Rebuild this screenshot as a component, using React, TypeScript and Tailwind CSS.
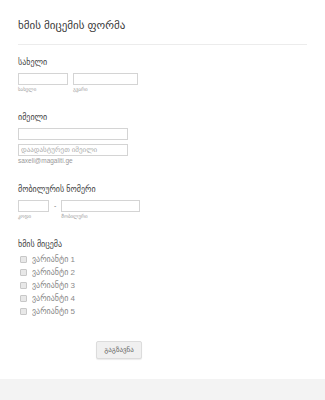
const font = "font-['Liberation_Sans','DejaVu_Sans',sans-serif]";

const options = ["ვარიანტი 1", "ვარიანტი 2", "ვარიანტი 3", "ვარიანტი 4", "ვარიანტი 5"];

export default function App() {
  return (
    <div className={`${font} min-h-[400px] bg-white flex flex-col`}>
      <div className="flex-1 px-[18px] pt-[18px]">
        <h1 className="text-[11px] leading-[14px] text-[#3a3a3a]">ხმის მიცემის ფორმა</h1>
        <div className="mt-[12px] w-[289px] border-b border-[#ececec]" />

        {/* სახელი */}
        <div className="mt-[13px]">
          <p className="text-[8px] leading-[10px] text-[#444]">სახელი</p>
          <div className="mt-[5px] flex gap-[5px]">
            <div className="flex flex-col">
              <div className="w-[50px] h-[12px] border border-[#d4d4d4] bg-white" />
              <span className="mt-[1px] text-[5px] leading-[7px] text-[#999]">სახელი</span>
            </div>
            <div className="flex flex-col">
              <div className="w-[65px] h-[12px] border border-[#d4d4d4] bg-white" />
              <span className="mt-[1px] text-[5px] leading-[7px] text-[#999]">გვარი</span>
            </div>
          </div>
        </div>

        {/* იმეილი */}
        <div className="mt-[20px]">
          <p className="text-[8px] leading-[10px] text-[#444]">იმეილი</p>
          <div className="mt-[5px] w-[110px] h-[12px] border border-[#d4d4d4] bg-white" />
          <div className="mt-[4px] w-[110px] h-[12px] border border-[#d4d4d4] bg-white flex items-center px-[2px]">
            <span className="text-[7px] leading-[10px] text-[#aaa]">დაადასტურეთ იმეილი</span>
          </div>
          <span className="block mt-[1px] text-[6.5px] leading-[8px] text-[#999]">saxeli@magaliti.ge</span>
        </div>

        {/* მობილურის ნომერი */}
        <div className="mt-[20px]">
          <p className="text-[8px] leading-[10px] text-[#444]">მობილურის ნომერი</p>
          <div className="mt-[5px] flex items-start gap-[3px]">
            <div className="flex flex-col">
              <div className="w-[31px] h-[12px] border border-[#d4d4d4] bg-white" />
              <span className="mt-[1px] text-[5px] leading-[7px] text-[#999]">კოდი</span>
            </div>
            <span className="px-[2px] text-[7px] leading-[12px] text-[#777]">-</span>
            <div className="flex flex-col">
              <div className="w-[79px] h-[12px] border border-[#d4d4d4] bg-white" />
              <span className="mt-[1px] text-[5px] leading-[7px] text-[#999]">მობილური</span>
            </div>
          </div>
        </div>

        {/* ხმის მიცემა */}
        <div className="mt-[20px]">
          <p className="text-[8px] leading-[10px] text-[#444]">ხმის მიცემა</p>
          <div className="mt-[3px] flex flex-col">
            {options.map((o) => (
              <label key={o} className="flex items-center h-[13px] pl-[2px]">
                <span className="w-[7px] h-[7px] rounded-[1px] border border-[#c8c8c8] bg-[#e8e8e8]" />
                <span className="ml-[5px] text-[8px] leading-[10px] text-[#8a8a8a]">{o}</span>
              </label>
            ))}
          </div>
        </div>

        <div className="mt-[23px] mb-[18px] flex pl-[78px]">
          <button className="w-[46px] h-[18px] rounded-[2px] border border-[#dcdcdc] bg-[#f0f0f0] text-[7px] text-[#666] shadow-[0_1px_1px_rgba(0,0,0,0.08)]">
            გაგზავნა
          </button>
        </div>
      </div>
      <div className="h-[21px] bg-[#f3f3f3]" />
    </div>
  );
}
